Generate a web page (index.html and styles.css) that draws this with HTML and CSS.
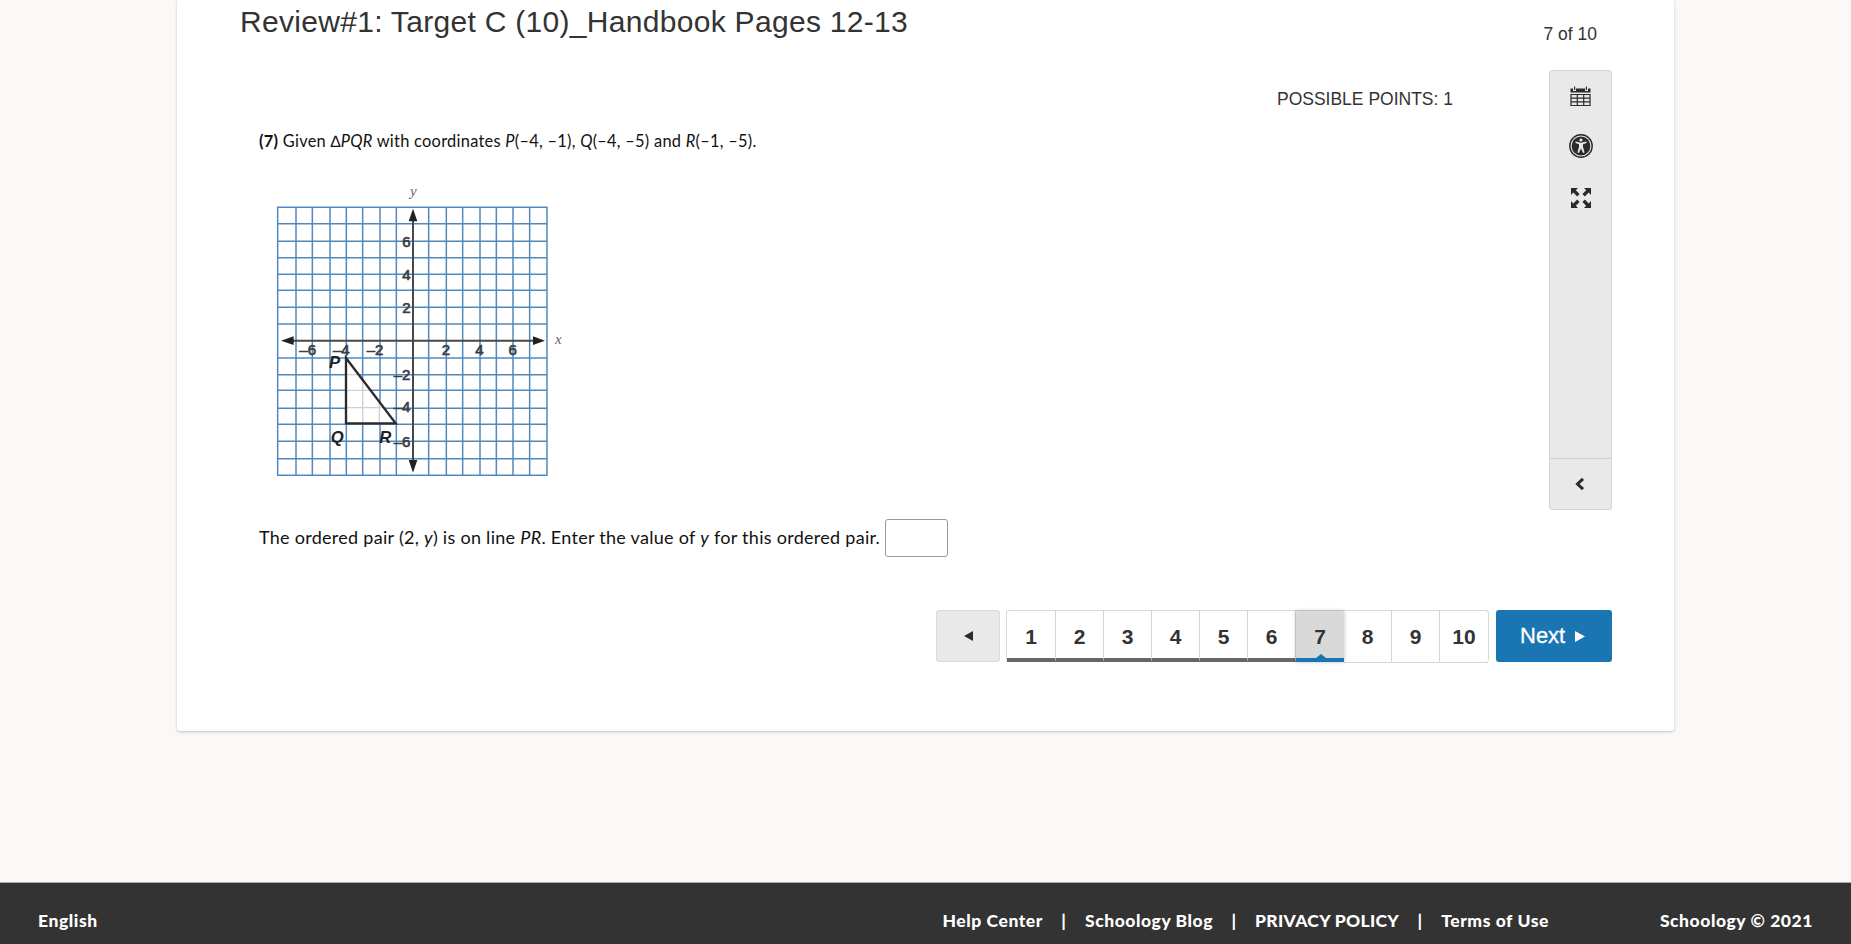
FILE: index.html
```
<!DOCTYPE html>
<html lang="en">
<head>
    <meta charset="UTF-8">
    <meta name="viewport" content="width=device-width, initial-scale=1.0">
    <title>Review#1: Target C (10)_Handbook Pages 12-13</title>
    <link rel="stylesheet" href="styles.css">
</head>
<body>
    <main class="card">
        <header class="card-header">
            <h1 class="title">Review#1: Target C (10)_Handbook Pages 12-13</h1>
            <div class="progress">7 of 10</div>
        </header>
        <div class="content">
            <section class="question">
                <div class="points">POSSIBLE POINTS: 1</div>
                <p class="prompt"><b>(7)</b> Given ∆<i>PQR</i> with coordinates <i>P</i>(–4, –1), <i>Q</i>(–4, –5) and <i>R</i>(–1, –5).</p>
                <svg class="graph" width="310" height="310" viewBox="0 0 930 930">
                    <path class="grid" d="M38 82V886M93 82V886M142 82V886M195 82V886M244 82V886M293 82V886M345 82V886M394 82V886M491 82V886M544 82V886M593 82V886M645 82V886M694 82V886M744 82V886M794 82V886M846 82V886M36 82H848M36 131H848M36 184H848M36 233H848M36 283H848M36 331H848M36 382H848M36 432H848M36 534H848M36 584H848M36 631H848M36 685H848M36 733H848M36 784H848M36 836H848M36 886H848"/>
                    <path class="inside" d="M243 534L392 730H243Z"/>
                    <path class="faint" d="M243 584H278M243 631H316M243 683H354M293 602V728M343 668V728"/>
                    <path class="axis" d="M70 482H820M444 110V855"/>
                    <path class="arrow" d="M48 482L86 469V495ZM840 482L804 469V495ZM444 86L431 124H457ZM444 878L431 840H457Z"/>
                    <path class="triangle" d="M243 534L392 730H243Z"/>
                    <g class="ticks">
                        <text x="128" y="525">–6</text>
                        <text x="229" y="525">–4</text>
                        <text x="330" y="525">–2</text>
                        <text x="543" y="525">2</text>
                        <text x="643" y="525">4</text>
                        <text x="743" y="525">6</text>
                        <text x="424" y="201">6</text>
                        <text x="424" y="299">4</text>
                        <text x="424" y="399">2</text>
                        <text x="411" y="600">–2</text>
                        <text x="411" y="697">–4</text>
                        <text x="411" y="801">–6</text>
                    </g>
                    <g class="vertices">
                        <text x="209" y="565">P</text>
                        <text x="217" y="789">Q</text>
                        <text x="361" y="789">R</text>
                    </g>
                    <g class="axis-names">
                        <text x="445" y="48">y</text>
                        <text x="880" y="493">x</text>
                    </g>
                </svg>
                <div class="answer">
                    <span class="answer-text">The ordered pair (2, <i>y</i>) is on line <i>PR</i>. Enter the value of <i>y</i> for this ordered pair.</span>
                    <input class="answer-input" type="text" aria-label="Answer">
                </div>
            </section>
            <aside class="tools">
                <svg class="icon-calendar" width="21" height="21" viewBox="0 0 21 21">
                    <path d="M0.5 2.5H3V5H6V2.5H15V5H18V2.5H20.5V6.5H0.5Z"/>
                    <path d="M4 0.5H5.2V4H4ZM15.8 0.5H17V4H15.8Z"/>
                    <path d="M1 8.5H20V19.5H1ZM1 12.2H20M1 15.9H20M7.3 8.5V19.5M13.7 8.5V19.5" fill="none" stroke="#2b2b2b" stroke-width="1.2"/>
                </svg>
                <svg class="icon-access" width="24" height="24" viewBox="0 0 24 24">
                    <circle cx="12" cy="12" r="11.2" fill="none" stroke="#2b2b2b" stroke-width="1.4"/>
                    <circle cx="12" cy="12" r="9.4"/>
                    <circle cx="12" cy="6" r="1.6" fill="#e9e9e9"/>
                    <path d="M6.5 7.6L12 8.8L17.5 7.6V9L14 10.2V13L15.6 18.5L14.2 19L12 14.4L9.8 19L8.4 18.5L10 13V10.2L6.5 9Z" fill="#e9e9e9"/>
                </svg>
                <svg class="icon-expand" width="20" height="20" viewBox="0 0 20 20">
                    <path id="arm" d="M0 0H7L4.8 2.2L8.6 6L6.2 8.4L2.3 4.6L0 7Z"/>
                    <use href="#arm" transform="matrix(-1 0 0 1 20 0)"/>
                    <use href="#arm" transform="matrix(1 0 0 -1 0 20)"/>
                    <use href="#arm" transform="matrix(-1 0 0 -1 20 20)"/>
                </svg>
                <button class="collapse" aria-label="Collapse">
                    <svg width="10" height="14" viewBox="0 0 10 14">
                        <path d="M8 1.8L2.5 7L8 12.2" fill="none" stroke="#2b2b2b" stroke-width="3"/>
                    </svg>
                </button>
            </aside>
        </div>
        <nav class="pager">
            <button class="prev" aria-label="Previous">
                <svg width="9" height="10" viewBox="0 0 9 10"><path d="M9 0V10L0 5Z"/></svg>
            </button>
            <ol class="pages">
                <li class="page done">1</li>
                <li class="page done">2</li>
                <li class="page done">3</li>
                <li class="page done">4</li>
                <li class="page done">5</li>
                <li class="page done">6</li>
                <li class="page current">7</li>
                <li class="page">8</li>
                <li class="page">9</li>
                <li class="page">10</li>
            </ol>
            <button class="next">
                <span>Next</span>
                <svg width="10" height="11" viewBox="0 0 10 11"><path d="M0 0V11L10 5.5Z"/></svg>
            </button>
        </nav>
    </main>
    <footer class="footer">
        <span class="language">English</span>
        <div class="links">
            <a>Help Center</a><span class="bar">|</span><a>Schoology Blog</a><span class="bar">|</span><a class="policy">PRIVACY POLICY</a><span class="bar">|</span><a>Terms of Use</a>
        </div>
        <span class="copyright">Schoology © 2021</span>
    </footer>
</body>
</html>
```
FILE: styles.css
```
* {
    box-sizing: border-box;
}
body {
    margin: 0;
    height: 944px;
    overflow: hidden;
    display: flex;
    flex-direction: column;
    background-color: #faf9f7;
    color: #333;
    font-family: "Liberation Sans", Arial, sans-serif;
}
h1, p, ol {
    margin: 0;
    padding: 0;
    font-weight: normal;
}
button {
    padding: 0;
    font-family: inherit;
}
.card {
    width: 1497px;
    height: 731px;
    margin-left: 177px;
    padding: 0 62px 0 63px;
    background-color: #fff;
    border-radius: 0 0 3px 3px;
    box-shadow: 0 1px 3px rgba(0, 0, 0, 0.22);
}
.card-header {
    display: flex;
    justify-content: space-between;
    height: 70px;
}
.title {
    margin-top: 4px;
    font-size: 30px;
    letter-spacing: 0.3px;
    line-height: 35px;
    white-space: nowrap;
}
.progress {
    margin: 24px 15px 0 0;
    font-size: 17.5px;
    line-height: 20px;
}
.content {
    display: flex;
    justify-content: space-between;
    height: 540px;
}
.question {
    display: flex;
    flex-direction: column;
    width: 1213px;
    padding-left: 19px;
    color: #111;
    font-family: Lato, sans-serif;
}
.points {
    align-self: flex-end;
    margin-top: 19px;
    color: #333;
    font-family: "Liberation Sans", Arial, sans-serif;
    font-size: 17.5px;
    line-height: 20px;
}
.prompt {
    height: 22px;
    margin-top: 21px;
    font-size: 16.4px;
    letter-spacing: 0.27px;
    line-height: 22px;
    white-space: nowrap;
}
.graph {
    margin: 28px 0 0 6px;
    flex: none;
    font-family: "Liberation Sans", Arial, sans-serif;
}
.grid {
    fill: none;
    stroke: #5289bd;
    stroke-width: 4.5;
}
.inside {
    fill: #fff;
}
.faint {
    fill: none;
    stroke: #d4cdd4;
    stroke-width: 4;
}
.axis {
    fill: none;
    stroke: #484848;
    stroke-width: 6;
}
.arrow {
    fill: #222;
}
.triangle {
    fill: none;
    stroke: #2b2b2b;
    stroke-width: 7;
}
.graph text {
    text-anchor: middle;
}
.ticks {
    fill: #3c3c42;
    stroke: #3c3c42;
    stroke-width: 2;
    font-size: 45px;
}
.vertices {
    fill: #222;
    font-size: 50px;
    font-weight: bold;
    font-style: italic;
}
.axis-names {
    fill: #666;
    font-family: "Liberation Serif", serif;
    font-size: 45px;
    font-style: italic;
}
.answer {
    display: flex;
    align-items: center;
    gap: 4px;
    margin-top: 29px;
}
.answer-text {
    width: 622px;
    padding-bottom: 2px;
    font-size: 18px;
    letter-spacing: 0.28px;
    line-height: 24px;
    white-space: nowrap;
}
.answer-input {
    width: 63px;
    height: 38px;
    border: 1px solid #999;
    border-radius: 3px;
    background-color: #fff;
}
.tools {
    display: flex;
    flex-direction: column;
    align-items: center;
    width: 63px;
    height: 440px;
    padding-top: 15px;
    background-color: #e9e9e9;
    border: 1px solid #d5d5d5;
    border-radius: 3px;
    fill: #2b2b2b;
}
.icon-access {
    margin-top: 27px;
}
.icon-expand {
    margin-top: 30px;
}
.collapse {
    display: flex;
    align-items: center;
    justify-content: center;
    width: 61px;
    height: 51px;
    margin-top: auto;
    padding-right: 2px;
    background: none;
    border: 0;
    border-top: 1px solid #d0d0d0;
}
.pager {
    display: flex;
    justify-content: flex-end;
    height: 52px;
}
.prev {
    width: 64px;
    height: 52px;
    margin-right: 6px;
    background-color: #e9e9e9;
    border: 1px solid #d8d8d8;
    border-radius: 3px;
    fill: #2b2b2b;
}
.pages {
    display: flex;
    width: 483px;
    height: 52px;
    margin-right: 7px;
    list-style: none;
    border: 1px solid #d8d8d8;
    border-width: 1px 1px 0 1px;
    border-radius: 3px;
}
.page {
    flex: 0 0 48px;
    height: 52px;
    border-right: 1px solid #d5d5d5;
    border-bottom: 1px solid #d5d5d5;
    font-size: 21px;
    font-weight: bold;
    line-height: 52px;
    text-align: center;
}
.page:first-child {
    flex: 0 0 49px;
}
.page:last-child {
    flex: 1;
    border-right: 0;
}
.page.done {
    height: 51px;
    border-bottom: 4px solid #666;
}
.page.current {
    position: relative;
    height: 51px;
    background-color: #d9d9d9;
    border-bottom: 4px solid #1a76b2;
    border-right: 0;
    box-shadow: 0 0 4px rgba(0, 0, 0, 0.25);
}
.page.current::after {
    content: "";
    position: absolute;
    left: 20px;
    bottom: 0;
    border: 5px solid transparent;
    border-top: 0;
    border-bottom: 4px solid #1a76b2;
}
.next {
    display: flex;
    align-items: center;
    gap: 10px;
    width: 116px;
    height: 52px;
    padding-left: 24px;
    color: #fff;
    background-color: #1a76b2;
    border: 0;
    border-radius: 3px;
    font-size: 22px;
    fill: #fff;
    -webkit-text-stroke: 0.3px #fff;
}
.footer {
    display: flex;
    height: 62px;
    margin-top: auto;
    padding: 0 38px;
    color: #fff;
    background-color: #333;
    border-top: 1px solid #aaa;
    font-family: Lato, sans-serif;
    font-size: 17.5px;
    font-weight: 900;
    letter-spacing: 0.56px;
    line-height: 76px;
    white-space: nowrap;
}
.links {
    display: flex;
    margin-left: auto;
}
.bar {
    width: 42px;
    text-align: center;
}
.policy {
    letter-spacing: 0.3px;
}
.copyright {
    margin-left: 111px;
}
```
